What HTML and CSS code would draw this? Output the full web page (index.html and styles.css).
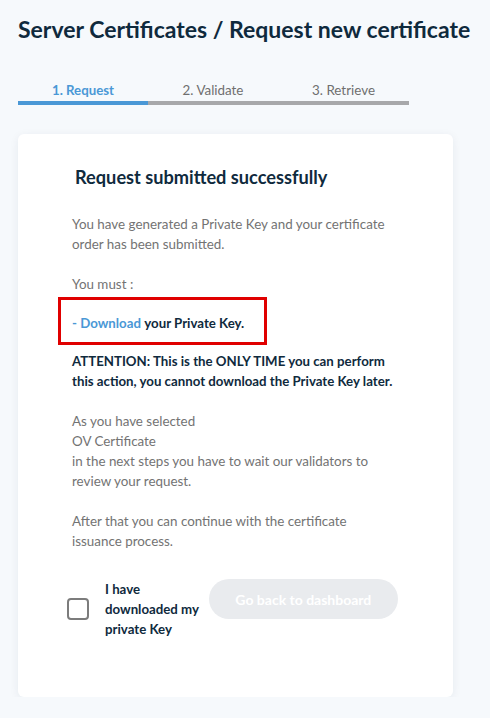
FILE: index.html
```html
<!DOCTYPE html>
<html>
<head>
<meta charset="utf-8">
<link rel="stylesheet" href="styles.css">
</head>
<body>
<div class="page">
  <h1 class="title">Server Certificates / Request new certificate</h1>
  <div class="stepper">
    <div class="step active">1. Request</div>
    <div class="step">2. Validate</div>
    <div class="step">3. Retrieve</div>
  </div>
  <div class="card">
    <h2 class="card-title">Request submitted successfully</h2>
    <p class="text">You have generated a Private Key and your certificate order has been submitted.</p>
    <p class="text">You must :</p>
    <div class="highlight">
      <span class="link">- Download</span>&nbsp;<span class="strong">your Private Key.</span>
    </div>
    <p class="text strong">ATTENTION: This is the ONLY TIME you can perform this action, you cannot download the Private Key later.</p>
    <p class="text">As you have selected<br>OV Certificate<br>in the next steps you have to wait our validators to review your request.</p>
    <p class="text">After that you can continue with the certificate issuance process.</p>
    <div class="footer">
      <span class="checkbox"></span>
      <span class="check-label">I have downloaded my private Key</span>
      <button class="btn" disabled>Go back to dashboard</button>
    </div>
  </div>
</div>
</body>
</html>
```
FILE: styles.css
```css
html, body {
  margin: 0;
  padding: 0;
  background: #f6f9fc;
  font-family: Lato, "Open Sans", sans-serif;
}
.page {
  padding: 14px 0 0 18px;
}
.title {
  margin: 0;
  font-size: 23px;
  line-height: 30px;
  font-weight: 700;
  color: #0f2a3d;
  white-space: nowrap;
}
.stepper {
  display: grid;
  grid-template-columns: 130px 130px 131px;
  width: 391px;
  margin-top: 38px;
}
.step {
  text-align: center;
  font-size: 13.4px;
  line-height: 16px;
  color: #6f6f6f;
  padding-bottom: 3px;
  border-bottom: 4px solid #a7a8aa;
}
.step.active {
  color: #4a98d6;
  font-weight: 700;
  font-size: 13.25px;
  border-bottom-color: #4a98d6;
}
.card {
  margin-top: 29px;
  width: 435px;
  height: 563px;
  box-sizing: border-box;
  background: #fff;
  border-radius: 6px;
  box-shadow: 0 2px 10px rgba(20, 40, 70, 0.07);
  padding: 29px 55px 0 54px;
}
.card-title {
  margin: 0 0 23px 3px;
  font-size: 18.2px;
  line-height: 28px;
  font-weight: 700;
  color: #0f2a3d;
}
.text {
  margin: 0 0 20px 0;
  font-size: 13.4px;
  line-height: 20px;
  color: #737373;
}
.text.strong, .strong {
  font-weight: 700;
  font-size: 13.25px;
  color: #0f2a3d;
}
.highlight {
  margin: -17px 0 6px -14px;
  width: 192px;
  height: 38px;
  padding: 4px 0 0 11px;
  border: 3px solid #e00000;
  display: flex;
  align-items: center;
  font-size: 13.25px;
  line-height: 20px;
}
.link {
  color: #4a98d6;
  font-weight: 700;
}
.footer {
  display: flex;
  align-items: center;
  margin: 28px 0 0 -5px;
}
.checkbox {
  width: 18px;
  height: 18px;
  border: 2px solid #7c7c7c;
  border-radius: 4px;
  flex: none;
}
.check-label {
  margin-left: 16px;
  width: 100px;
  font-size: 13.25px;
  line-height: 20px;
  font-weight: 700;
  color: #0f2a3d;
}
.btn {
  align-self: flex-start;
  margin-left: 4px;
  width: 190px;
  height: 40px;
  border: none;
  border-radius: 20px;
  background: #e9ebee;
  color: #ffffff;
  font-family: Lato, sans-serif;
  font-size: 14px;
  font-weight: 700;
}
```
